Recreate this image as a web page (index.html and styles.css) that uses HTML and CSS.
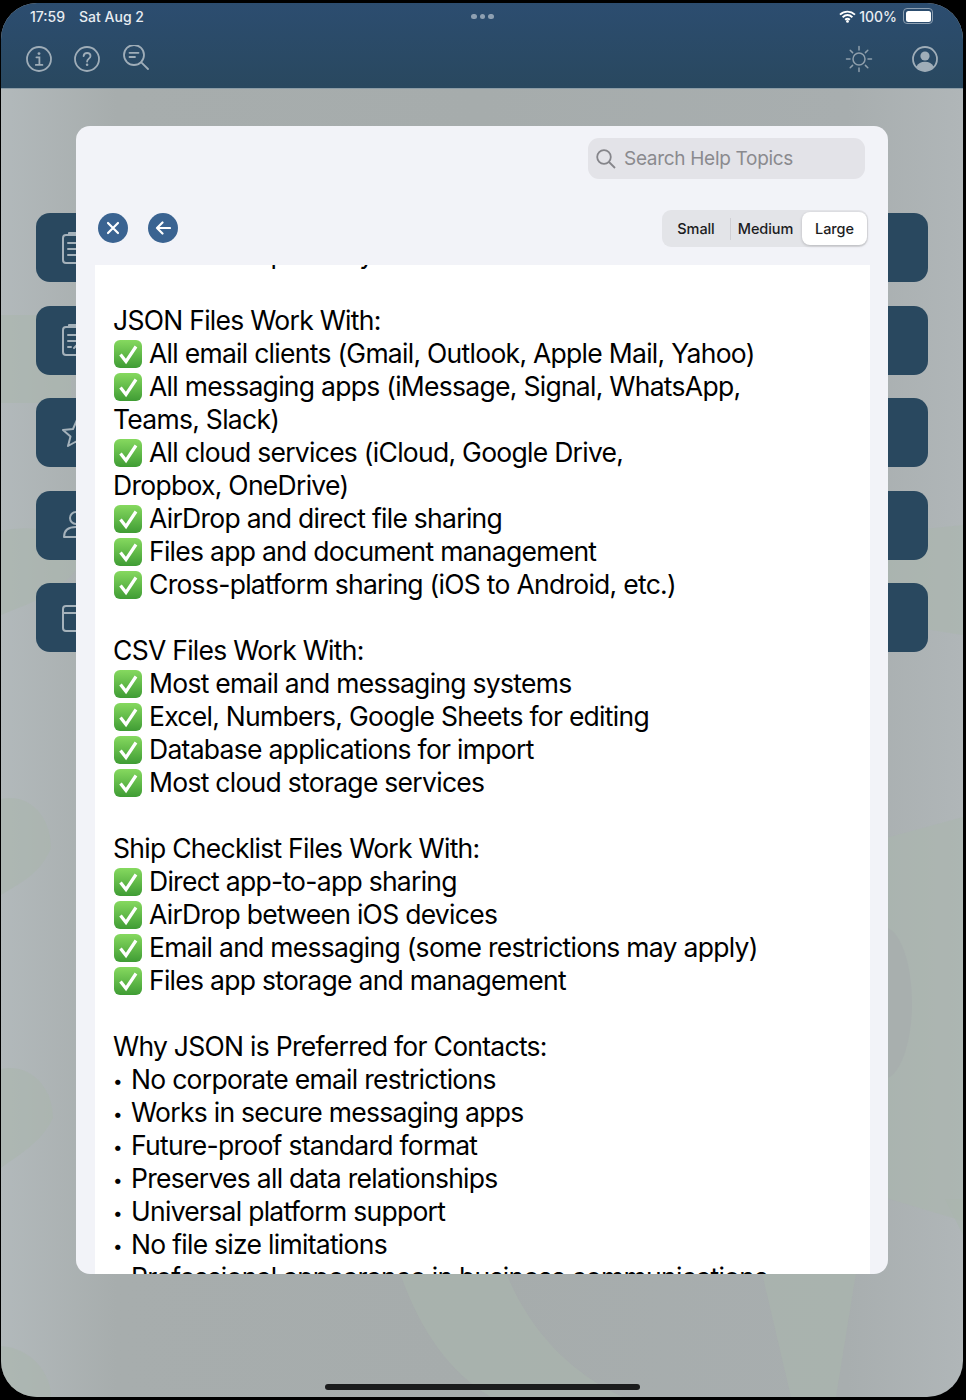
FILE: index.html
```html
<!DOCTYPE html>
<html lang="en">
<head>
    <meta charset="UTF-8">
    <meta name="viewport" content="width=device-width, initial-scale=1.0">
    <title>Help Topics</title>
    <link rel="stylesheet" href="styles.css">
</head>
<body>
    <svg class="defs" width="0" height="0" aria-hidden="true">
        <symbol id="check" viewBox="0 0 30 30">
            <defs>
                <linearGradient id="checkFill" x1="0" y1="0" x2="0" y2="1">
                    <stop offset="0" stop-color="#86d95f"/>
                    <stop offset="1" stop-color="#3f9c34"/>
                </linearGradient>
            </defs>
            <rect x="1" y="1" width="28" height="28" rx="6" fill="url(#checkFill)"/>
            <path d="M7.500 15.500L13 22.500L23 7.500" fill="none" stroke="#fff" stroke-width="3.200" stroke-linejoin="miter"/>
        </symbol>
    </svg>

    <div class="screen">
        <!-- wallpaper behind the dashboard -->
        <svg class="wallpaper" viewBox="0 0 962 1394" aria-hidden="true">
            <g fill="#aab6ad" fill-opacity="0.6">
                <path d="M0 312H70V400H0z"/>
                <path d="M0 528C40 520 70 530 80 560C60 590 30 600 0 612z"/>
                <path d="M0 796C30 790 50 815 50 845C40 870 20 880 0 892z"/>
                <path d="M0 1066C30 1060 52 1085 52 1115C40 1140 20 1150 0 1165z"/>
                <path d="M0 1343C30 1345 50 1370 50 1394H0z"/>
                <path d="M885 530L962 522V632L885 620z"/>
                <path d="M885 835L962 814V1218L885 1195z"/>
                <path d="M399 1270H505C530 1330 570 1370 622 1394H490C450 1370 420 1330 399 1270z"/>
                <path d="M761 1270H855L835 1394H790z"/>
                <path d="M944 1196L962 1196V1232z"/>
            </g>
            <ellipse cx="882" cy="1000" rx="29" ry="76" fill="#a8afae"/>
        </svg>

        <header class="app-header">
            <div class="status-bar">
                <div class="status-left"><span>17:59</span><span>Sat Aug 2</span></div>
                <div class="status-dots"><i></i><i></i><i></i></div>
                <div class="status-right">
                    <svg width="17" height="13" viewBox="0 0 17 13">
                        <path d="M1 4.600C5.400.6 11.600.6 16 4.600M3.600 7.200c3-2.600 6.800-2.600 9.800 0M6.100 9.700c1.500-1.100 3.300-1.100 4.800 0" fill="none" stroke="#fff" stroke-width="1.900"/>
                        <circle cx="8.500" cy="11.400" r="1.400" fill="#fff"/>
                    </svg>
                    <span>100%</span>
                    <span class="battery"><span class="battery-level"></span></span>
                </div>
            </div>
            <div class="toolbar">
                <div class="toolbar-group">
                    <svg class="tool-icon" width="26" height="26" viewBox="0 0 26 26">
                        <circle cx="13" cy="13" r="12"/>
                        <circle class="solid" cx="13" cy="7.600" r="1.400"/>
                        <path d="M10.400 11.300h3v7.400M9.800 18.900h6.600"/>
                    </svg>
                    <svg class="tool-icon" width="26" height="26" viewBox="0 0 26 26">
                        <circle cx="13" cy="13" r="12"/>
                        <path d="M9.600 10.200c.2-2 1.700-3.200 3.500-3.200 2 0 3.400 1.300 3.400 3 0 2.600-3.400 2.700-3.400 5.500"/>
                        <circle class="solid" cx="13.100" cy="18.800" r="1.300"/>
                    </svg>
                    <svg class="tool-icon lens-icon" width="26" height="26" viewBox="0 0 26 26">
                        <circle cx="11" cy="10" r="10"/>
                        <path d="M6.500 7.800h9M6.500 12h5.500M18.300 17.300l6.700 6.700"/>
                    </svg>
                </div>
                <div class="toolbar-group toolbar-right">
                    <svg class="tool-icon sun-icon" width="28" height="28" viewBox="0 0 28 28">
                        <circle cx="14" cy="14" r="6"/>
                        <path d="M14 1.500v3.500M14 23v3.500M1.500 14H5M23 14h3.500M5.200 5.200l2.400 2.400M20.400 20.400l2.400 2.400M5.200 22.800l2.400-2.400M20.400 7.600l2.400-2.400"/>
                    </svg>
                    <svg class="tool-icon" width="26" height="26" viewBox="0 0 26 26">
                        <circle cx="13" cy="13" r="12"/>
                        <circle class="solid" cx="13" cy="10" r="4.600"/>
                        <path class="solid" d="M4.300 20.800C6 17.200 9 15.800 13 15.800s7 1.400 8.700 5C19.500 23.500 16.500 25 13 25s-6.500-1.500-8.700-4.200z"/>
                    </svg>
                </div>
            </div>
        </header>

        <main class="dashboard">
            <div class="menu-card">
                <svg class="card-icon" width="24" height="34" viewBox="0 0 24 34">
                    <rect x="1" y="4" width="22" height="28" rx="3"/>
                    <path d="M7 4V2h10v2M6 12h12M6 18h12M6 24h12"/>
                </svg>
            </div>
            <div class="menu-card">
                <svg class="card-icon" width="24" height="34" viewBox="0 0 24 34">
                    <rect x="1" y="4" width="22" height="28" rx="3"/>
                    <path d="M7 4V2h10v2M6 12h12M6 18h8M6 24h3M12 25l6-6"/>
                </svg>
            </div>
            <div class="menu-card">
                <svg class="card-icon" width="30" height="30" viewBox="0 0 30 30">
                    <path d="M15 2l4 9 10 1-7.500 6.500L24 28l-9-5-9 5 2.500-9.500L1 12l10-1z"/>
                </svg>
            </div>
            <div class="menu-card">
                <svg class="card-icon" width="26" height="30" viewBox="0 0 26 30">
                    <circle cx="14" cy="8" r="6"/>
                    <path d="M2 27c0-7 5-10 12-10s12 3 12 10z"/>
                </svg>
            </div>
            <div class="menu-card">
                <svg class="card-icon" width="26" height="28" viewBox="0 0 26 28">
                    <rect x="1" y="2" width="24" height="25" rx="3"/>
                    <path d="M1 9h24"/>
                </svg>
            </div>
        </main>

        <section class="help-modal">
            <div class="modal-search-row">
                <div class="search-box">
                    <svg width="20" height="20" viewBox="0 0 20 20" fill="none" stroke="#85858a" stroke-width="1.800">
                        <circle cx="8" cy="8" r="6.800"/>
                        <path d="M13 13l6 6"/>
                    </svg>
                    <span>Search Help Topics</span>
                </div>
            </div>
            <div class="modal-controls">
                <div class="round-buttons">
                    <button class="round-btn" type="button" aria-label="Close">
                        <svg width="14" height="14" viewBox="0 0 14 14"><path d="M2 2l10 10M12 2L2 12"/></svg>
                    </button>
                    <button class="round-btn" type="button" aria-label="Back">
                        <svg width="16" height="14" viewBox="0 0 16 14"><path d="M15 7H2M7.500 1.500L2 7l5.500 5.500"/></svg>
                    </button>
                </div>
                <div class="size-picker">
                    <span class="size-option">Small</span>
                    <span class="size-divider"></span>
                    <span class="size-option">Medium</span>
                    <span class="size-option size-active">Large</span>
                </div>
            </div>
            <article class="help-body">
                <div class="help-text">
                    <p>Contacts are primarily</p>
                    <p>JSON Files Work With:<br>
                    <svg class="tick"><use href="#check"/></svg>All email clients (Gmail, Outlook, Apple Mail, Yahoo)<br>
                    <svg class="tick"><use href="#check"/></svg>All messaging apps (iMessage, Signal, WhatsApp,<br>
                    Teams, Slack)<br>
                    <svg class="tick"><use href="#check"/></svg>All cloud services (iCloud, Google Drive,<br>
                    Dropbox, OneDrive)<br>
                    <svg class="tick"><use href="#check"/></svg>AirDrop and direct file sharing<br>
                    <svg class="tick"><use href="#check"/></svg>Files app and document management<br>
                    <svg class="tick"><use href="#check"/></svg>Cross-platform sharing (iOS to Android, etc.)</p>
                    <p>CSV Files Work With:<br>
                    <svg class="tick"><use href="#check"/></svg>Most email and messaging systems<br>
                    <svg class="tick"><use href="#check"/></svg>Excel, Numbers, Google Sheets for editing<br>
                    <svg class="tick"><use href="#check"/></svg>Database applications for import<br>
                    <svg class="tick"><use href="#check"/></svg>Most cloud storage services</p>
                    <p>Ship Checklist Files Work With:<br>
                    <svg class="tick"><use href="#check"/></svg>Direct app-to-app sharing<br>
                    <svg class="tick"><use href="#check"/></svg>AirDrop between iOS devices<br>
                    <svg class="tick"><use href="#check"/></svg>Email and messaging (some restrictions may apply)<br>
                    <svg class="tick"><use href="#check"/></svg>Files app storage and management</p>
                    <p>Why JSON is Preferred for Contacts:<br>
                    <span class="dot">•</span>No corporate email restrictions<br>
                    <span class="dot">•</span>Works in secure messaging apps<br>
                    <span class="dot">•</span>Future-proof standard format<br>
                    <span class="dot">•</span>Preserves all data relationships<br>
                    <span class="dot">•</span>Universal platform support<br>
                    <span class="dot">•</span>No file size limitations<br>
                    <span class="dot">•</span>Professional appearance in business communications</p>
                </div>
            </article>
        </section>

        <div class="home-bar"></div>
    </div>
</body>
</html>
```

FILE: styles.css
```css
html, body { margin: 0; background: #000; }
body { font-family: Inter, "Liberation Sans", sans-serif; }
.defs { position: absolute; }

.screen {
    position: relative;
    width: 962px;
    height: 1394px;
    margin: 3px 3px 3px 1px;
    border-radius: 36px;
    overflow: hidden;
    background: linear-gradient(90deg, #b2b9bb 0%, #a7adad 12%, #a6acac 50%, #a8aeaf 88%, #b0b6b8 100%);
}
.wallpaper { position: absolute; left: 0; top: 0; width: 962px; height: 1394px; }

.app-header {
    position: relative;
    height: 86px;
    background: linear-gradient(180deg, #2c4d70 0%, #29485f 100%);
    border-bottom: 1px solid #8b9ca6;
    box-sizing: border-box;
}
.status-bar {
    display: grid;
    grid-template-columns: 1fr auto 1fr;
    align-items: center;
    height: 26px;
    padding: 0 30px 0 29px;
    color: #e8edf2;
    font-size: 14px;
    font-weight: 500;
}
.status-left { display: flex; gap: 14px; }
.status-dots { display: flex; gap: 3px; margin: 1px 0 0 2px; }
.status-dots i { width: 5.500px; height: 5.500px; border-radius: 50%; background: #8ea0b2; }
.status-right { display: flex; justify-content: flex-end; align-items: center; gap: 3px; }
.battery {
    display: block;
    width: 25px;
    height: 11px;
    padding: 1.500px;
    margin-left: 3px;
    border: 1px solid #8ea0b2;
    border-radius: 4px;
}
.battery-level { display: block; height: 100%; background: #fff; border-radius: 2.500px; }

.toolbar {
    display: flex;
    justify-content: space-between;
    align-items: center;
    height: 36px;
    margin-top: 12px;
    padding: 0 25px;
}
.toolbar-group { display: flex; align-items: center; gap: 22px; }
.toolbar-right { gap: 39px; }
.tool-icon { fill: none; stroke: #9fadb8; stroke-width: 1.800; stroke-linecap: round; }
.tool-icon .solid { fill: #9fadb8; stroke: none; }
.lens-icon { margin: -3px 0 0 1px; }
.sun-icon { stroke-width: 1.500; stroke: #8f9fac; }

.dashboard {
    position: relative;
    display: flex;
    flex-direction: column;
    gap: 23.500px;
    padding: 124px 35px 0;
}
.menu-card {
    display: flex;
    align-items: center;
    height: 69px;
    padding-left: 26px;
    border-radius: 14px;
    background: #29485f;
}
.card-icon { fill: none; stroke: #a5b2bb; stroke-width: 2; stroke-linecap: round; stroke-linejoin: round; }

/* sheet that lies over the dashboard */
.help-modal {
    position: absolute;
    left: 75px;
    top: 123px;
    display: flex;
    flex-direction: column;
    width: 812px;
    height: 1148px;
    box-sizing: border-box;
    padding: 0 18px 0 19px;
    border-radius: 14px;
    overflow: hidden;
    background: #f2f3f8;
}
.modal-search-row { display: flex; justify-content: flex-end; padding: 12px 5px 0 0; }
.search-box {
    display: flex;
    align-items: center;
    gap: 8px;
    width: 277px;
    height: 41px;
    box-sizing: border-box;
    padding-left: 8px;
    border-radius: 11px;
    background: #e3e3e8;
    color: #8a8a8e;
    font-size: 19px;
    letter-spacing: -0.3px;
}
.modal-controls {
    display: flex;
    justify-content: space-between;
    align-items: center;
    height: 37px;
    margin-top: 31px;
    margin-left: 3px;
    margin-right: 2px;
}
.round-buttons { display: flex; gap: 20px; margin-top: -1px; }
.round-btn {
    display: flex;
    align-items: center;
    justify-content: center;
    width: 30px;
    height: 30px;
    padding: 0;
    border: none;
    border-radius: 50%;
    background: #3a6391;
}
.round-btn svg { fill: none; stroke: #fff; stroke-width: 2.200; stroke-linecap: round; stroke-linejoin: round; }
.size-picker {
    display: flex;
    align-items: center;
    width: 206px;
    height: 37px;
    box-sizing: border-box;
    padding: 2px 1px 2px 0;
    border-radius: 9px;
    background: #e3e4e8;
    color: #1c1c1e;
    font-size: 14.500px;
    font-weight: 500;
    letter-spacing: -0.1px;
}
.size-option { display: flex; align-items: center; justify-content: center; height: 33px; padding-bottom: 1px; box-sizing: border-box; }
.size-option:nth-child(1) { width: 68px; }
.size-option:nth-child(3) { width: 71px; padding-right: 2px; }
.size-divider { width: 1px; height: 22px; background: #cfcfd4; }
.size-active { width: 65px; background: #fff; border-radius: 8px; box-shadow: 0 1px 3px rgba(0,0,0,0.2); }

.help-body {
    flex: 1;
    min-height: 0;
    margin-top: 18px;
    overflow: hidden;
    background: #fff;
}
.help-text {
    margin-top: -27px;
    padding-left: 18px;
    color: #000;
    font-size: 26.500px;
    line-height: 33px;
    letter-spacing: -0.72px;
    white-space: nowrap;
}
.help-text p { margin: 0 0 33px; }
.tick {
    width: 30px;
    height: 30px;
    margin: -5px 6px -5px 0;
    vertical-align: -1px;
}
.dot {
    display: inline-block;
    width: 18px;
    font-size: 17px;
    line-height: 1;
    letter-spacing: 0;
    vertical-align: 2px;
}

.home-bar {
    position: absolute;
    left: 324px;
    bottom: 7px;
    width: 315px;
    height: 6px;
    border-radius: 3px;
    background: #1b1c1d;
}
```
